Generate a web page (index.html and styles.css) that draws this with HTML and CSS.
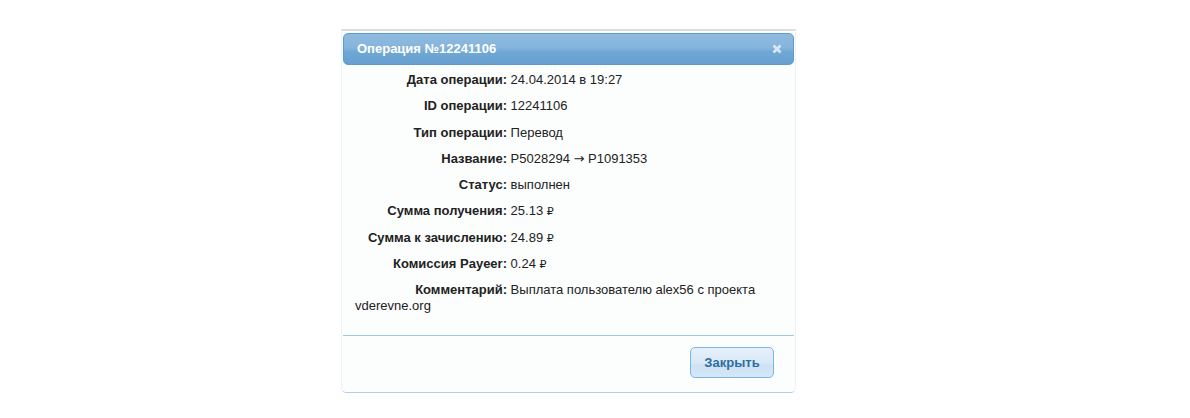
FILE: index.html
```html
<!DOCTYPE html>
<html lang="ru">
<head>
<meta charset="utf-8">
<title>Операция №12241106</title>
<link rel="stylesheet" href="styles.css">
</head>
<body>
<div class="dialog">
  <div class="titlebar">
    <span class="title">Операция №12241106</span>
    <span class="close" aria-label="close">
      <svg width="10" height="10" viewBox="0 0 10 10"><path d="M1.5 1.5 L8.5 8.5 M8.5 1.5 L1.5 8.5" stroke="#dbe8f4" stroke-width="2.6" stroke-linecap="butt"/></svg>
    </span>
  </div>
  <div class="content">
    <p class="row"><span class="label">Дата операции:</span> 24.04.2014 в 19:27</p>
    <p class="row"><span class="label">ID операции:</span> 12241106</p>
    <p class="row"><span class="label">Тип операции:</span> Перевод</p>
    <p class="row"><span class="label">Название:</span> P5028294 <span class="arrow">→</span> P1091353</p>
    <p class="row"><span class="label">Статус:</span> выполнен</p>
    <p class="row"><span class="label">Сумма получения:</span> 25.13 <span class="rub">₽</span></p>
    <p class="row"><span class="label">Сумма к зачислению:</span> 24.89 <span class="rub">₽</span></p>
    <p class="row"><span class="label">Комиссия Payeer:</span> 0.24 <span class="rub">₽</span></p>
    <p class="row"><span class="label">Комментарий:</span> Выплата пользователю alex56 с проекта vderevne.org</p>
  </div>
  <div class="buttonpane">
    <button class="btn" type="button">Закрыть</button>
  </div>
</div>
</body>
</html>
```

FILE: styles.css
```css
html, body {
  margin: 0;
  padding: 0;
  background: #ffffff;
}

body {
  font-family: "Liberation Sans", Arial, sans-serif;
  font-size: 13px;
  color: #222222;
}

.dialog {
  width: 451px;
  margin: 29px 0 0 341px;
  padding: 2px 1px 0 1px;
  border-top: 2px solid #dcdfe2;
  border-left: 1px solid #eef3f7;
  border-right: 1px solid #eef3f7;
  border-bottom: 1px solid #b3cde3;
  border-radius: 0 0 5px 5px;
  background: #fcfdfd;
}

.titlebar {
  height: 30px;
  display: flex;
  align-items: center;
  justify-content: space-between;
  padding: 0 11px 0 13px;
  border: 1px solid #5a9dd3;
  border-radius: 5px;
  background: linear-gradient(to bottom, #8fbbdf 0%, #85b4db 45%, #6fa7d4 60%, #67a0d0 100%);
  color: #ffffff;
}

.title {
  font-weight: bold;
  font-size: 13px;
  line-height: 16px;
}

.close {
  display: flex;
  width: 10px;
  height: 10px;
}

.content {
  padding: 7px 12px 11px 12px;
}

.row {
  margin: 0 0 10.25px 0;
  line-height: 16px;
}

.label {
  display: inline-block;
  width: 152px;
  text-align: right;
  font-weight: bold;
}

.rub {
  font-family: "DejaVu Sans", sans-serif;
  font-size: 11px;
  line-height: 0;
}

.arrow {
  font-family: "DejaVu Sans", sans-serif;
  font-size: 13px;
  line-height: 0;
}

.buttonpane {
  display: flex;
  justify-content: flex-end;
  border-top: 1px solid #a6c9e2;
  padding: 11px 20px 14px 0;
}

.btn {
  width: 84px;
  height: 31px;
  padding: 0;
  border: 1px solid #79b7e7;
  border-radius: 5px;
  background: linear-gradient(to bottom, #e5f0fa 0%, #dae9f7 50%, #cde2f4 60%, #d6e8f7 100%);
  color: #2e6e9e;
  font-family: "Liberation Sans", Arial, sans-serif;
  font-size: 13px;
  font-weight: bold;
  line-height: 16px;
}
```
